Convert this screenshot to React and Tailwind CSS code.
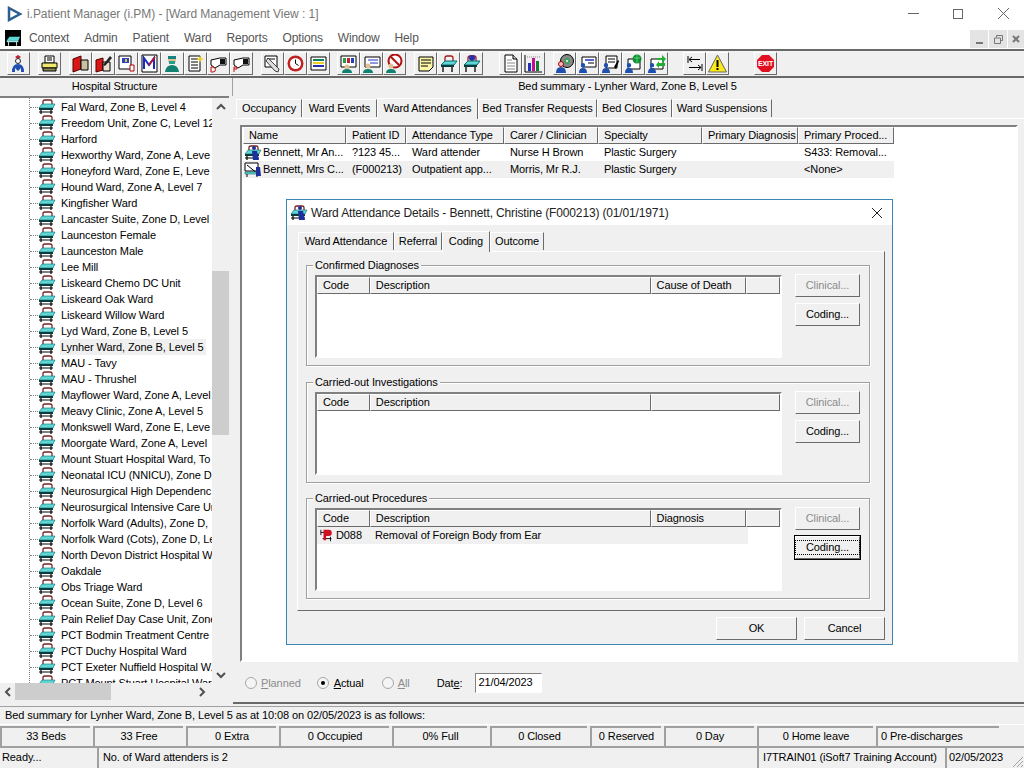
const wards = [
  "Fal Ward, Zone B, Level 4", "Freedom Unit, Zone C, Level 12", "Harford", "Hexworthy Ward, Zone A, Leve",
  "Honeyford Ward, Zone E, Leve", "Hound Ward, Zone A, Level 7", "Kingfisher Ward", "Lancaster Suite, Zone D, Level",
  "Launceston Female", "Launceston Male", "Lee Mill", "Liskeard Chemo DC Unit", "Liskeard Oak Ward", "Liskeard Willow Ward",
  "Lyd Ward, Zone B, Level 5", "Lynher Ward, Zone B, Level 5", "MAU - Tavy", "MAU - Thrushel", "Mayflower Ward, Zone A, Level",
  "Meavy Clinic, Zone A, Level 5", "Monkswell Ward, Zone E, Leve", "Moorgate Ward, Zone A, Level",
  "Mount Stuart Hospital Ward, To", "Neonatal ICU (NNICU), Zone D", "Neurosurgical High Dependenc", "Neurosurgical Intensive Care Ur",
  "Norfolk Ward (Adults), Zone D,", "Norfolk Ward (Cots), Zone D, Le", "North Devon District Hospital W", "Oakdale",
  "Obs Triage Ward", "Ocean Suite, Zone D, Level 6", "Pain Relief Day Case Unit, Zone", "PCT Bodmin Treatment Centre",
  "PCT Duchy Hospital Ward", "PCT Exeter Nuffield Hospital W.", "PCT Mount Stuart Hospital War",
];

const raised = "border border-t-white border-l-white border-r-[#6b6b6b] border-b-[#6b6b6b]";
const sunken = "border border-t-[#808080] border-l-[#808080] border-r-white border-b-white";

function Bed({ person }) {
  return (
    <svg width="18" height="16" viewBox="0 0 18 16" className="shrink-0">
      <path d="M5 5V2.500Q5 1 7 1h5q2 0 2 1.500V5" fill="none" stroke="#7a2020" strokeWidth="1.300" />
      <path d="M1 9l3-4h13l-2 4z" fill="#5fd6d6" stroke="#0a6a6a" strokeWidth=".6" />
      <path d="M1 9h14v2H1z" fill="#0a3a3a" />
      <path d="M3 11v4M13 11v4M1 13h14" stroke="#000" strokeWidth="1.200" />
      {person && <path d="M10 1a2 2 0 1 1 0 4 2 2 0 0 1 0-4zM8 6h5l2 9H9z" fill="#1c2f9a" />}
    </svg>
  );
}

function PersonBadge() {
  return <path d="M5 9a2.200 2.200 0 1 1 0 4.400A2.200 2.200 0 0 1 5 9zM1 19q0-5 4-5t4 5z" fill="#1f4fb0" />;
}

const toolIcons = [
  <><path d="M9 1l3 2-3 2-3-2z" fill="#c02030" /><circle cx="9" cy="7" r="2.500" fill="#fff" stroke="#223" /><path d="M3 18q0-8 6-8t6 8h-3v-4l-3 3-3-3v4z" fill="#1f4fb0" /></>,
  <><path d="M5 2h9v7H5z" fill="#fff" stroke="#000" /><path d="M7 4h5M7 6h5" stroke="#000" /><path d="M2 9h15v5H2z" fill="#f2e870" stroke="#000" /><path d="M3 14h13v3H3z" fill="#8a8a50" stroke="#000" /></>,
  <><path d="M2 5l8-3v13l-8 3z" fill="#d81818" stroke="#500" /><path d="M10 6h7v10h-7z" fill="#c8c0a0" stroke="#000" /></>,
  <><path d="M2 6l7-2v12l-7 2z" fill="#d81818" stroke="#500" /><path d="M9 8h7v9H9z" fill="#e8e0d0" stroke="#000" /><path d="M9 11l7-9 2 2-7 8z" fill="#222" /></>,
  <><path d="M2 2h12v13H2z" fill="#fff" stroke="#000" /><path d="M5 4h7v5H5z" fill="#3040c8" /><path d="M8 5h2v3H8z" fill="#d0d020" /><path d="M13 11h4v6h-4z" fill="#fff" stroke="#a00" /></>,
  <><path d="M2 1h15v17H2z" fill="#fff" stroke="#000" /><path d="M4 15V4l5 7 5-7v11" fill="none" stroke="#1a2ac0" strokeWidth="2" /><path d="M9 11l6-8" stroke="#d01020" strokeWidth="1.500" /></>,
  <><circle cx="9" cy="6" r="4" fill="#e0c090" /><path d="M5 2h8v3H5z" fill="#178080" /><path d="M6 7h6v3H6z" fill="#20a090" /><path d="M2 18q1-7 7-7t7 7z" fill="#108070" /></>,
  <><path d="M3 2h11v15H3z" fill="#fff" stroke="#000" /><path d="M5 5h7M5 8h7M5 11h7M5 14h7" stroke="#000" /><path d="M14 1l1 3 3 1-3 1-1 3-1-3-3-1 3-1z" fill="#f0d020" /></>,
  <><path d="M2 6l9-2h6v7h-6l-5 3-4-3z" fill="#fff" stroke="#000" /><path d="M11 5h5v5h-5z" fill="#111" /><path d="M2 13h2a2 2 0 0 1 0 5H2z" fill="none" stroke="#c01010" /></>,
  <><path d="M2 6l9-2h6v7h-6l-5 3-4-3z" fill="#fff" stroke="#000" /><path d="M11 5h5v5h-5z" fill="#111" /><path d="M2 18v-5h3v2H2" fill="none" stroke="#c01010" /></>,
  <><path d="M2 2h12v11H2z" fill="#fff" stroke="#000" /><path d="M4 5h8M4 8h5" stroke="#000" /><path d="M5 4l11 11-1 3-3-1L3 7z" fill="#ddd" stroke="#000" strokeWidth=".7" /></>,
  <><circle cx="9.500" cy="9.500" r="8" fill="#c02020" /><circle cx="9.500" cy="9.500" r="5.500" fill="#fff" /><path d="M9.500 5.500v4l3 2" stroke="#000" fill="none" /></>,
  <><path d="M2 3h15v13H2z" fill="#fff" stroke="#000" /><path d="M4 5h11v2H4z" fill="#108060" /><path d="M4 8h11v2H4z" fill="#f0d020" /><path d="M4 11h11v2H4z" fill="#2030b0" /></>,
  <><path d="M2 2h15v11H2z" fill="#fff" stroke="#000" /><path d="M4 4h3v5H4z" fill="#20a040" /><path d="M8 4h3v5H8z" fill="#c02030" /><path d="M12 4h3v5h-3z" fill="#2040c0" /><circle cx="8" cy="13" r="2.500" fill="#e0c090" /><path d="M3 19q0-4 5-4t5 4z" fill="#108070" /></>,
  <><path d="M3 3h15v10H3z" fill="#fff" stroke="#000" /><path d="M6 6h10M8 9h8" stroke="#2030c0" /><circle cx="6" cy="12" r="2.500" fill="#e0c090" /><path d="M1 19q0-4 5-4t5 4z" fill="#108070" /></>,
  <><circle cx="10" cy="7" r="6.500" fill="#fff" stroke="#b01010" strokeWidth="2" /><path d="M6 3l8 8" stroke="#b01010" strokeWidth="2" /><circle cx="6" cy="12" r="2.500" fill="#e0c090" /><path d="M1 19q0-4 5-4t5 4z" fill="#108070" /></>,
  <><path d="M3 3h14v10l-4 4H3z" fill="#fbf5a8" stroke="#000" /><path d="M5 6h10M5 9h10M5 12h7" stroke="#000" /></>,
  <><path d="M6 7V4q0-2 2-2h4q2 0 2 2v3" fill="none" stroke="#a01818" strokeWidth="1.300" /><path d="M2 11l4-4h12l-3 4z" fill="#5fd6d6" stroke="#0a6a6a" /><path d="M2 11h13v2H2z" fill="#0a3a3a" /><path d="M4 13v5M13 13v5" stroke="#000" strokeWidth="1.300" /></>,
  <><path d="M6 7V4q0-2 2-2h4q2 0 2 2v3" fill="none" stroke="#a01818" strokeWidth="1.300" /><circle cx="10" cy="4" r="3" fill="#2030b0" /><path d="M2 11l4-4h12l-3 4z" fill="#5fd6d6" stroke="#0a6a6a" /><path d="M2 11h13v2H2z" fill="#0a3a3a" /><path d="M4 13v5M13 13v5" stroke="#000" strokeWidth="1.300" /></>,
  <><path d="M4 1h8l4 4v13H4z" fill="#fff" stroke="#000" /><path d="M12 1v4h4" fill="#ccc" stroke="#000" /><path d="M6 6h5M6 9h8M6 12h8M6 15h8" stroke="#888" /></>,
  <><path d="M1 1v17h17" fill="none" stroke="#000" /><path d="M4 9h3v8H4z" fill="#2030c0" /><path d="M8 4h3v13H8z" fill="#c01090" /><path d="M12 7h3v10h-3z" fill="#108030" /><path d="M3 3h14" stroke="#888" strokeDasharray="1 1" /></>,
  <><circle cx="12" cy="7" r="6.500" fill="#888" stroke="#000" /><circle cx="12" cy="7" r="3" fill="#40a060" /><circle cx="12" cy="7" r="1" fill="#fff" /><circle cx="6" cy="10" r="2.500" fill="#f0c0c0" stroke="#a00" /><path d="M1 19q0-6 5-6t5 6z" fill="#1f4fb0" /></>,
  <><path d="M4 3h14v10H4z" fill="#fff" stroke="#000" /><path d="M7 6h9" stroke="#2030c0" strokeWidth="1.500" /><path d="M10 9h6" stroke="#000" /><PersonBadge /></>,
  <><path d="M5 2h11v12H5z" fill="#fff" stroke="#000" /><path d="M7 5h7M7 8h7" stroke="#000" /><path d="M13 13l4-7 1 1-3 8z" fill="#000" /><PersonBadge /></>,
  <><path d="M4 5h12v10H4z" fill="#fff" stroke="#000" /><circle cx="13" cy="5" r="4.500" fill="#109030" /><path d="M10 4h6M13 1v8" stroke="#50d070" /><PersonBadge /></>,
  <><path d="M4 5h12v10H4z" fill="#fff" stroke="#000" /><path d="M10 4h5V1l4 4-4 4V6h-5z" fill="#20b030" /><path d="M18 9h-6V7l-3 4 3 3v-2h6z" fill="#20b030" /><PersonBadge /></>,
  <><path d="M3 2v7M17 10v7" stroke="#000" /><path d="M4 5.500h11M7 3L4 5.500 7 8M4 13.500h12M13 11l3 2.500-3 2.500" fill="none" stroke="#000" /></>,
  <><path d="M9.500 1L18.500 18H.5z" fill="#fbe91c" stroke="#666" /><path d="M8.500 6h2v7h-2zM8.500 14h2v2h-2z" fill="#000" /></>,
  <><path d="M6 1h7l5 5v7l-5 5H6l-5-5V6z" fill="#e01020" /><text x="9.500" y="12" textAnchor="middle" fontSize="7" fontWeight="700" fill="#fff" fontFamily="Liberation Sans, sans-serif">EXIT</text></>,
];

// icons per toolbar group, ml is the gap before the group
const toolGroups = [
  { ml: "ml-[7px]", from: 0, to: 1 },
  { ml: "ml-[8px]", from: 1, to: 2 },
  { ml: "ml-[8px]", from: 2, to: 10 },
  { ml: "ml-[8px]", from: 10, to: 13 },
  { ml: "ml-[7px]", from: 13, to: 16 },
  { ml: "ml-[8px]", from: 16, to: 19 },
  { ml: "ml-[16px]", from: 19, to: 21 },
  { ml: "ml-[8px]", from: 21, to: 26 },
  { ml: "ml-[15px]", from: 26, to: 28 },
  { ml: "ml-[25px]", from: 28, to: 29 },
];

function Toolbar() {
  return (
    <div className="flex items-center h-[27px] shrink-0 bg-[#f0f0f0] border-t-2 border-[#696969]">
      {toolGroups.map((g) => (
        <div key={g.from} className={`flex ${g.ml}`}>
          {toolIcons.slice(g.from, g.to).map((icon, i) => (
            <div key={i} className={`w-[23px] h-[23px] flex items-center justify-center ${raised}`}>
              <svg width="19" height="19" viewBox="0 0 19 19">{icon}</svg>
            </div>
          ))}
        </div>
      ))}
    </div>
  );
}

function Arrow({ dir }) {
  const d = { up: "M1 6l4-4 4 4", down: "M1 2l4 4 4-4", left: "M6 1L2 5l4 4", right: "M2 1l4 4-4 4" }[dir];
  const w = dir === "up" || dir === "down" ? 10 : 8;
  const h = dir === "up" || dir === "down" ? 8 : 10;
  return (
    <svg width={w} height={h} viewBox={`0 0 ${w} ${h}`}>
      <path d={d} fill="none" stroke="#505050" strokeWidth="2" />
    </svg>
  );
}

function Tree() {
  return (
    <div className="flex-1 min-h-0 flex border-t-2 border-[#808080]">
      <div className="w-[212px] bg-white overflow-hidden relative pt-[1px]">
        <div className="absolute left-[29px] top-0 bottom-0 border-l border-dotted border-[#808080]" />
        {wards.map((w) => (
          <div key={w} className="flex items-center h-[16px] pl-[30px] whitespace-nowrap">
            <div className="w-[8px] shrink-0 border-t border-dotted border-[#808080]" />
            <Bed />
            <span className={`ml-[4px] px-[1px] shrink-0 text-black ${w.startsWith("Lynher") ? "bg-[#f0f0f0] pr-[2px]" : ""}`}>{w}</span>
          </div>
        ))}
      </div>
      <div className="w-[17px] bg-[#f0f0f0] flex flex-col items-center">
        <div className="h-[17px] flex items-center justify-center shrink-0"><Arrow dir="up" /></div>
        <div className="flex-1 w-full">
          <div className="w-full h-[164px] mt-[156px] bg-[#cdcdcd]" />
        </div>
        <div className="h-[17px] flex items-center justify-center shrink-0"><Arrow dir="down" /></div>
      </div>
    </div>
  );
}

function TabStrip({ tabs, active }) {
  return (
    <div className="flex items-end h-[21px] relative z-10">
      {tabs.map((t) => (
        <div
          key={t.label}
          style={{ width: t.w }}
          className={`border-t border-l border-white border-r border-r-[#6b6b6b] whitespace-nowrap text-center ${
            t.label === active ? "h-[21px] pt-[1px] -mb-[1px] bg-[#f0f0f0] leading-[16px]" : "h-[18px] mb-[1px] leading-[17px]"
          }`}
        >
          {t.label}
        </div>
      ))}
    </div>
  );
}

const wardCols = [
  { label: "Name", w: 103 },
  { label: "Patient ID", w: 60 },
  { label: "Attendance Type", w: 98 },
  { label: "Carer / Clinician", w: 94 },
  { label: "Specialty", w: 104 },
  { label: "Primary Diagnosis", w: 96 },
  { label: "Primary Proced...", w: 96 },
];

const wardRows = [
  { cells: ["Bennett, Mr An...", "?123 45...", "Ward attender", "Nurse H Brown", "Plastic Surgery", "", "S433: Removal..."], icon: "bed" },
  { cells: ["Bennett, Mrs C...", "(F000213)", "Outpatient app...", "Morris, Mr R.J.", "Plastic Surgery", "", "<None>"], icon: "doc", alt: true },
];

function HeaderCells({ cols }) {
  return (
    <div className="flex h-[17px] shrink-0">
      {cols.map((c, i) => (
        <div key={i} style={{ width: c.w }} className={`${raised} bg-[#f0f0f0] pl-[5px] leading-[15px] whitespace-nowrap overflow-hidden`}>
          {c.label}
        </div>
      ))}
    </div>
  );
}

function WardList() {
  return (
    <div className="flex-1 ml-[7px] mr-[6px] mt-[6px] mb-[2px] bg-white border-2 border-t-[#808080] border-l-[#808080] border-r-white border-b-white pl-[1px]">
      <HeaderCells cols={wardCols} />
      {wardRows.map((r) => (
        <div key={r.cells[0]} className={`flex h-[17px] items-center w-[651px] ${r.alt ? "bg-[#f0f0f0]" : ""}`}>
          {r.cells.map((c, i) => (
            <div
              key={i}
              style={{ width: wardCols[i].w }}
              className={`flex items-center whitespace-nowrap ${i === 0 ? "pl-[1px]" : "pl-[6px]"}`}
            >
              {i === 0 &&
                (r.icon === "bed" ? (
                  <Bed person />
                ) : (
                  <svg width="18" height="16" viewBox="0 0 18 16" className="shrink-0">
                    <path d="M1 1h13v8H1z" fill="#fff" stroke="#000" />
                    <path d="M3 3l11 9" stroke="#000" />
                    <path d="M1 10h12v2H1z" fill="#5fd6d6" stroke="#0a6a6a" strokeWidth=".6" />
                    <path d="M3 12v3M13 12v3" stroke="#000" />
                    <path d="M12 5h4l1 9h-5z" fill="#1c2f9a" />
                  </svg>
                ))}
              <span className={i === 0 ? "ml-[1px]" : ""}>{c}</span>
            </div>
          ))}
        </div>
      ))}
    </div>
  );
}

function Radio({ label, on, gap }) {
  return (
    <div className="flex items-center text-[#8c8c8c]">
      <div className="w-[12px] h-[12px] rounded-full border border-[#a8a8a8] bg-[#f4f4f4] flex items-center justify-center">
        {on && <div className="w-[4px] h-[4px] rounded-full bg-black" />}
      </div>
      <span className={`${gap} ${on ? "text-black" : ""}`}>
        <span className="underline">{label[0]}</span>
        {label.slice(1)}
      </span>
    </div>
  );
}

function DlgButton({ label, disabled, focus }) {
  return (
    <div
      className={`w-[65px] h-[23px] flex items-center justify-center ${raised} ${disabled ? "text-[#8c8c8c]" : ""} ${
        focus ? "outline outline-1 outline-black" : ""
      }`}
    >
      <span className={focus ? "border border-dotted border-black px-[10px] leading-[13px]" : ""}>{label}</span>
    </div>
  );
}

function CodingGroup({ title, cols, rows }) {
  return (
    <div className="relative h-[101px] border border-[#a0a0a0] shadow-[inset_1px_1px_0_#fff,1px_1px_0_#fff] flex px-[8px] pt-[9px]">
      <span className="absolute -top-[8px] left-[6px] bg-[#f0f0f0] px-[2px] leading-[14px]">{title}</span>
      <div className="w-[467px] h-[83px] bg-white border-2 border-t-[#808080] border-l-[#808080] border-r-white border-b-white">
        <HeaderCells cols={cols} />
        {rows.map((r) => (
          <div key={r.code} className="flex items-center h-[17px] w-[431px] bg-[#f0f0f0]">
            <svg width="14" height="15" viewBox="0 0 16 15" className="ml-[3px] shrink-0">
              <path d="M1 1v6M1 4h10M12 9v5M3 11h10" stroke="#000" fill="none" />
              <path d="M4 1h6a3 3 0 0 1 0 7H7v5H4z" fill="#d01020" />
            </svg>
            <span className="ml-[2px] w-[39px]">{r.code}</span>
            <span>{r.text}</span>
          </div>
        ))}
      </div>
      <div className="ml-[13px] -mt-[1px] flex flex-col gap-[6px]">
        <DlgButton label="Clinical..." disabled />
        <DlgButton label="Coding..." focus={rows.length > 0} />
      </div>
    </div>
  );
}

function Dialog() {
  return (
    <div className="absolute left-[286px] top-[199px] w-[607px] h-[446px] border border-[#3a86b4] bg-[#f0f0f0] flex flex-col">
      <div className="h-[25px] bg-white flex items-center shrink-0">
        <div className="ml-[3px]"><Bed person /></div>
        <span className="ml-[3px] text-[#222] text-[12px] tracking-[-0.15px]">Ward Attendance Details - Bennett, Christine (F000213) (01/01/1971)</span>
        <svg width="12" height="12" viewBox="0 0 12 12" className="ml-auto mr-[9px]">
          <path d="M1 1l10 10M11 1L1 11" stroke="#222" />
        </svg>
      </div>
      <div className="pl-[10px] pr-[7px] pt-[5px] flex-1 flex flex-col">
        <div className="pl-[1px]">
          <TabStrip
            active="Coding"
            tabs={[
              { label: "Ward Attendance", w: 96 },
              { label: "Referral", w: 48 },
              { label: "Coding", w: 48 },
              { label: "Outcome", w: 54 },
            ]}
          />
        </div>
        <div className={`h-[360px] ${raised} pl-[8px] pr-[14px] pt-[13px] flex flex-col gap-[15.5px]`}>
          <CodingGroup
            title="Confirmed Diagnoses"
            rows={[]}
            cols={[{ label: "Code", w: 53 }, { label: "Description", w: 282 }, { label: "Cause of Death", w: 96 }, { label: "", w: 34 }]}
          />
          <CodingGroup
            title="Carried-out Investigations"
            rows={[]}
            cols={[{ label: "Code", w: 53 }, { label: "Description", w: 282 }, { label: "", w: 130 }]}
          />
          <CodingGroup
            title="Carried-out Procedures"
            rows={[{ code: "D088", text: "Removal of Foreign Body from Ear" }]}
            cols={[{ label: "Code", w: 53 }, { label: "Description", w: 282 }, { label: "Diagnosis", w: 96 }, { label: "", w: 34 }]}
          />
        </div>
        <div className="flex justify-end gap-[7px] mt-[6px]">
          {["OK", "Cancel"].map((b) => (
            <div key={b} className={`w-[81px] h-[23px] flex items-center justify-center ${raised}`}>{b}</div>
          ))}
        </div>
      </div>
    </div>
  );
}

const counts = [
  { t: "33 Beds", w: 90 }, { t: "33 Free", w: 90 }, { t: "0 Extra", w: 90 }, { t: "0 Occupied", w: 110 },
  { t: "0% Full", w: 95 }, { t: "0 Closed", w: 97 }, { t: "0 Reserved", w: 71 }, { t: "0 Day", w: 90 },
  { t: "0 Home leave", w: 116 }, { t: "0 Pre-discharges", w: 123, left: true },
];

export default function App() {
  return (
    <div
      className="relative w-[1024px] h-[768px] overflow-hidden flex flex-col bg-[#f0f0f0] text-[11px] tracking-[-0.1px] text-black"
      style={{ fontFamily: '"Liberation Sans", sans-serif' }}
    >
      {/* title bar */}
      <div className="h-[27px] bg-white flex items-center shrink-0">
        <svg width="16" height="16" viewBox="0 0 16 16" className="ml-[7px]">
          <path d="M2 2l11 6-11 6z" fill="none" stroke="#2c5f8f" strokeWidth="2.500" />
        </svg>
        <span className="ml-[4px] text-[#777] text-[12px] tracking-[-0.05px]">i.Patient Manager (i.PM) - [Ward Management View : 1]</span>
        <div className="ml-auto flex items-center">
          <div className="w-[11px] border-t border-[#666] mr-[34px]" />
          <div className="w-[10px] h-[10px] border border-[#666] mr-[35px]" />
          <svg width="11" height="11" viewBox="0 0 11 11" className="mr-[15px]">
            <path d="M0 0l11 11M11 0L0 11" stroke="#666" />
          </svg>
        </div>
      </div>

      {/* menu bar */}
      <div className="h-[22px] bg-white flex items-center shrink-0">
        <div className="ml-[5px] w-[16px] h-[16px] bg-black flex items-end justify-center">
          <svg width="16" height="13" viewBox="0 0 18 14">
            <path d="M2 8l3-4h12l-2 4z" fill="#5fd6d6" />
            <path d="M2 8h13v2H2z" fill="#9ee" />
            <path d="M4 10v4M13 10v4" stroke="#fff" />
          </svg>
        </div>
        <div className="flex ml-[8px] text-[#555] gap-[15px] text-[12px] tracking-[-0.15px]">
          {["Context", "Admin", "Patient", "Ward", "Reports", "Options", "Window", "Help"].map((m) => (
            <span key={m}>{m}</span>
          ))}
        </div>
        <div className="ml-auto flex gap-[1px] self-end h-[18px] mb-[1px]">
          <div className="w-[18px] bg-[#e4e4e4] flex items-end justify-center pb-[4px]"><div className="w-[7px] h-[2px] bg-[#777]" /></div>
          <div className="w-[18px] bg-[#e4e4e4] flex items-center justify-center">
            <svg width="9" height="9" viewBox="0 0 9 9"><path d="M2.500 2.500V.5h6v5h-2M.5 3h6v5.500h-6z" fill="none" stroke="#777" /></svg>
          </div>
          <div className="w-[16px] bg-[#e4e4e4] flex items-center justify-center">
            <svg width="8" height="8" viewBox="0 0 8 8"><path d="M1 1l6 6M7 1L1 7" stroke="#777" strokeWidth="2" /></svg>
          </div>
        </div>
      </div>

      <Toolbar />

      {/* main */}
      <div className="h-[628px] flex border-t-2 border-[#696969] shrink-0">
        <div className="w-[229px] flex flex-col shrink-0">
          <div className="h-[18px] text-center leading-[16px] shrink-0">Hospital Structure</div>
          <Tree />
          <div className="h-[17px] flex items-center shrink-0 mb-[4px]">
            <div className="w-[15px] flex justify-center"><Arrow dir="left" /></div>
            <div className="w-[96px] h-full bg-[#cdcdcd]" />
            <div className="ml-[83px] w-[16px] flex justify-center"><Arrow dir="right" /></div>
          </div>
        </div>
        <div className="w-[4px] border-r border-[#a0a0a0] h-[18px] shrink-0" />
        <div className="flex-1 flex flex-col min-w-0 border-b-2 border-[#696969]">
          <div className="h-[18px] text-center leading-[16px] shrink-0 pr-[2px]">Bed summary - Lynher Ward, Zone B, Level 5</div>
          <div className="pl-[3px] mt-[1px]">
            <TabStrip
              active="Ward Attendances"
              tabs={[
                { label: "Occupancy", w: 66 },
                { label: "Ward Events", w: 75 },
                { label: "Ward Attendances", w: 101 },
                { label: "Bed Transfer Requests", w: 119 },
                { label: "Bed Closures", w: 75 },
                { label: "Ward Suspensions", w: 100 },
              ]}
            />
          </div>
          <div className="flex-1 flex flex-col border-t border-white">
            <WardList />
            <div className="h-[38px] flex items-center pl-[12px] shrink-0">
              <Radio label="Planned" gap="ml-[4px]" />
              <div className="ml-[16px]"><Radio label="Actual" on gap="ml-[5px]" /></div>
              <div className="ml-[18px]"><Radio label="All" gap="ml-[4px]" /></div>
              <span className="ml-[27px]">Dat<span className="underline">e</span>:</span>
              <div className={`ml-[13px] w-[67px] h-[20px] bg-white ${sunken} pl-[2px] leading-[17px]`}>21/04/2023</div>
            </div>
          </div>
        </div>
      </div>

      {/* status area */}
      <div className="mt-[2px] h-[18px] border-t border-[#a0a0a0] pl-[5px] leading-[16px] shrink-0">
        Bed summary for Lynher Ward, Zone B, Level 5 as at 10:08 on 02/05/2023 is as follows:
      </div>
      <div className="flex gap-[3px] h-[22px] pt-[1px] border-t border-white shrink-0">
        {counts.map((c) => (
          <div
            key={c.t}
            style={{ width: c.w }}
            className={`border-t-2 border-l-2 border-[#a0a0a0] leading-[16px] ${c.left ? "pl-[3px]" : "text-center"}`}
          >
            {c.t}
          </div>
        ))}
      </div>
      <div className="flex flex-1 border-t-2 border-[#a0a0a0]">
        <div className="w-[97px] pl-[2px] leading-[18px]">Ready...</div>
        <div className="w-[656px] border-l-2 border-[#a0a0a0] pl-[4px] leading-[18px]">No. of Ward attenders is 2</div>
        <div className="w-[185px] ml-[4px] border-l-2 border-[#a0a0a0] pl-[4px] leading-[18px] whitespace-nowrap">I7TRAIN01 (iSoft7 Training Account)</div>
        <div className="w-[62px] ml-[3px] border-l-2 border-[#a0a0a0] pl-[2px] leading-[18px] whitespace-nowrap">02/05/2023</div>
        <svg width="14" height="14" viewBox="0 0 14 14" className="ml-auto self-end">
          <path d="M13 3L3 13M13 7l-6 6M13 11l-2 2" stroke="#a0a0a0" />
        </svg>
      </div>

      <Dialog />
    </div>
  );
}
